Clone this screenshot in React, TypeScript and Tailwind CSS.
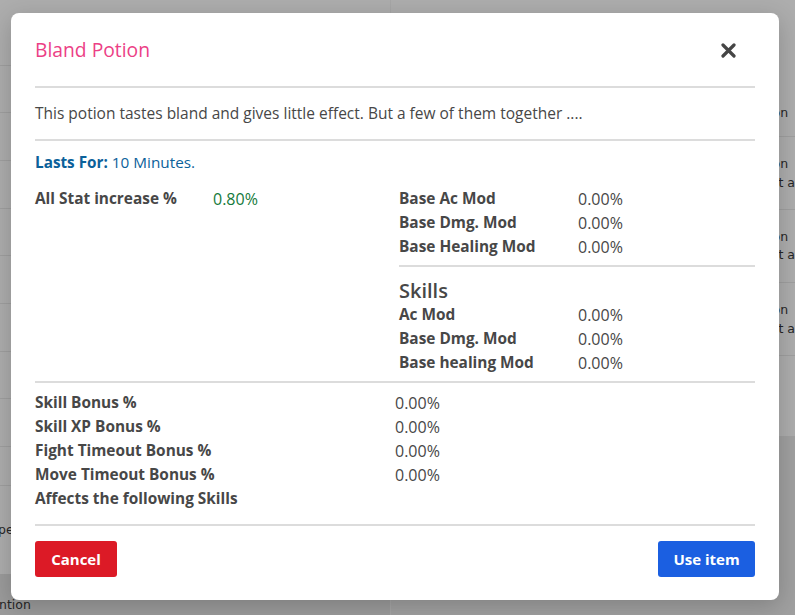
import React from 'react';

const font = { fontFamily: '"Open Sans", "Noto Sans", sans-serif' };
const bgFont = { fontFamily: '"DejaVu Sans", Verdana, sans-serif' };

const topStats = [
  { label: 'Base Ac Mod', value: '0.00%' },
  { label: 'Base Dmg. Mod', value: '0.00%' },
  { label: 'Base Healing Mod', value: '0.00%' },
];

const skillStats = [
  { label: 'Ac Mod', value: '0.00%' },
  { label: 'Base Dmg. Mod', value: '0.00%' },
  { label: 'Base healing Mod', value: '0.00%' },
];

const bonusStats = [
  { label: 'Skill Bonus %', value: '0.00%' },
  { label: 'Skill XP Bonus %', value: '0.00%' },
  { label: 'Fight Timeout Bonus %', value: '0.00%' },
  { label: 'Move Timeout Bonus %', value: '0.00%' },
];

const StatRow = ({ label, value, labelWidth }: { label: string; value: string; labelWidth: string }) => (
  <div className="flex h-6 items-center">
    <div className={`${labelWidth} text-[15.4px] font-bold text-[#474747]`}>{label}</div>
    <div className="text-[16px] text-[#474747]">{value}</div>
  </div>
);

const Backdrop = () => (
  <div className="absolute inset-0 flex bg-[#adadad] text-[12.5px] text-[#262626]" style={bgFont}>
    {/* faded page behind the modal */}
    <div className="flex w-[397px] flex-col border-r border-[#a6a6a6]">
      <div className="h-[66px] border-b border-[#9f9f9f]"></div>
      <div className="h-[48px] border-b border-[#9f9f9f]"></div>
      <div className="h-[48px] border-b border-[#9f9f9f]"></div>
      <div className="h-[48px] border-b border-[#9f9f9f]"></div>
      <div className="h-[48px] border-b border-[#9f9f9f]"></div>
      <div className="h-[48px] border-b border-[#9f9f9f]"></div>
      <div className="h-[48px] border-b border-[#9f9f9f]"></div>
      <div className="h-[48px] border-b border-[#9f9f9f]"></div>
      <div className="h-[48px] border-b border-[#9f9f9f]"></div>
      <div className="h-[39px] border-b border-[#9f9f9f]"></div>
      <div className="flex h-[89px] items-center whitespace-nowrap">
        <span className="-ml-[2px] pt-[1px]">pe</span>
      </div>
      <div className="flex-1 whitespace-nowrap bg-[#9b9b9b]">
        <div className="-ml-[1px] pt-[22px]">ntion</div>
      </div>
    </div>
    <div className="flex flex-1 flex-col">
      <div className="h-[104px]"></div>
      <div className="h-[33px] whitespace-nowrap border-b border-[#9f9f9f] pl-[382px]">on</div>
      <div className="flex h-[73px] flex-col justify-center whitespace-nowrap border-b border-[#9f9f9f] pl-[380px] leading-[19px]">
        <span className="pl-[2px]">on</span>
        <span>ut a</span>
      </div>
      <div className="flex h-[73px] flex-col justify-center whitespace-nowrap border-b border-[#9f9f9f] pl-[380px] leading-[18px]">
        <span className="pl-[2px]">on</span>
        <span>ut a</span>
      </div>
      <div className="flex h-[73px] flex-col justify-center whitespace-nowrap border-b border-[#9f9f9f] pl-[380px] leading-[19px]">
        <span className="pl-[2px]">on</span>
        <span>ut a</span>
      </div>
      <div className="h-[80px]"></div>
      <div className="flex-1 bg-[#a0a0a0]"></div>
    </div>
  </div>
);

const App = () => {
  return (
    <div className="relative h-[615px] w-[795px] overflow-hidden" style={font}>
      <Backdrop />

      {/* Modal */}
      <div className="absolute left-[11px] top-[13px] w-[768px] rounded-lg bg-white px-6 pb-[23px] pt-[23px] shadow-[0_6px_24px_rgba(0,0,0,0.2)]">
        <div className="flex h-7 items-center justify-between">
          <h2 className="text-[19.3px] font-normal text-[#ec3f86]">Bland Potion</h2>
          <button className="mr-[19px] text-[#454545]" aria-label="Close">
            <svg width="15" height="15" viewBox="0 0 15 15">
              <path d="M2 2 L13 13 M13 2 L2 13" stroke="currentColor" strokeWidth="3.2" strokeLinecap="round" />
            </svg>
          </button>
        </div>

        <div className="mt-[22px] h-[2px] bg-[#dcdcdc]"></div>

        <p className="mt-[14px] text-[15.5px] leading-[22px] text-[#474747]">
          This potion tastes bland and gives little effect. But a few of them together ....
        </p>

        <div className="mt-[15px] h-[2px] bg-[#dcdcdc]"></div>

        <div className="mt-[11px] text-[15.3px] leading-5 text-[#0b619a]">
          <span className="font-bold">Lasts For:</span> 10 Minutes.
        </div>

        <div className="mt-[15px] flex">
          <div className="w-[364px]">
            <div className="flex h-6 items-center">
              <div className="w-[178px] text-[15.4px] font-bold text-[#474747]">All Stat increase %</div>
              <div className="text-[16px] text-[#157a3c]">0.80%</div>
            </div>
          </div>
          <div className="flex-1">
            {topStats.map((s) => (
              <StatRow key={s.label} label={s.label} value={s.value} labelWidth="w-[179px]" />
            ))}
            <div className="mt-[6px] h-[2px] bg-[#dcdcdc]"></div>
            <div className="mt-3 text-[20px] font-semibold leading-6 text-[#474747]">Skills</div>
            {skillStats.map((s) => (
              <StatRow key={s.label} label={s.label} value={s.value} labelWidth="w-[179px]" />
            ))}
          </div>
        </div>

        <div className="mt-[6px] h-[2px] bg-[#dcdcdc]"></div>

        <div className="mt-2">
          {bonusStats.map((s) => (
            <StatRow key={s.label} label={s.label} value={s.value} labelWidth="w-[360px]" />
          ))}
          <div className="flex h-6 items-center text-[15.4px] font-bold text-[#474747]">
            Affects the following Skills
          </div>
        </div>

        <div className="mt-[13px] h-[2px] bg-[#dcdcdc]"></div>

        <div className="mt-[15px] flex items-center justify-between">
          <button className="h-9 w-[82px] rounded-[3px] bg-[#dc1a26] text-[15px] font-bold text-white">
            Cancel
          </button>
          <button className="h-9 w-[97px] rounded-[3px] bg-[#1b5fe1] text-[15px] font-bold text-white">
            Use item
          </button>
        </div>
      </div>
    </div>
  );
};

export default App;
